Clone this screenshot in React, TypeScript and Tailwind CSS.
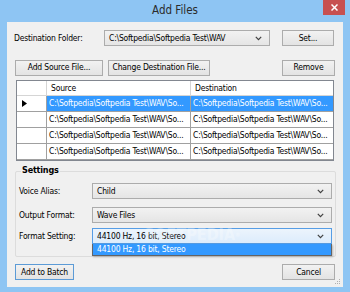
import React from "react";

const Chevron = () => (
  <svg width="7" height="5" viewBox="0 0 7 5" className="shrink-0">
    <path d="M0.8 0.8 L3.5 3.6 L6.2 0.8" fill="none" stroke="#404040" strokeWidth="1.2" />
  </svg>
);

function Combo({ text, w, active = false }: { text: string; w: string; active?: boolean }) {
  return (
    <div
      className={
        "flex items-center justify-between pl-[4px] pr-[7px] h-[16px] border " +
        w +
        (active
          ? " border-[#569de5] bg-gradient-to-b from-[#ecf4fc] to-[#dcecfc]"
          : " border-[#acacac] bg-gradient-to-b from-[#f2f2f2] to-[#e5e5e5]")
      }
    >
      <span className="whitespace-nowrap leading-none">{text}</span>
      <Chevron />
    </div>
  );
}

function Btn({ text, w, def = false }: { text: string; w: string; def?: boolean }) {
  return (
    <div
      className={
        "flex items-center justify-center h-[16px] border bg-gradient-to-b from-[#f2f2f2] to-[#e3e3e3] " +
        w +
        (def ? " border-[#5c9bd6]" : " border-[#acacac]")
      }
    >
      <span className="whitespace-nowrap leading-none">{text}</span>
    </div>
  );
}

const path = "C:\\Softpedia\\Softpedia Test\\WAV\\So...";

function Row({ sel }: { sel?: boolean }) {
  return (
    <div className="flex h-[16px] border-b border-[#a0a0a0]">
      <div className="w-[30px] shrink-0 border-r border-[#a0a0a0] bg-white flex items-center pl-[5px]">
        {sel && (
          <svg width="5" height="7" viewBox="0 0 5 7">
            <path d="M0 0 L5 3.5 L0 7 Z" fill="#000" />
          </svg>
        )}
      </div>
      <div
        className={
          "w-[144px] shrink-0 border-r border-[#a0a0a0] flex items-center pl-[2px] overflow-hidden whitespace-nowrap " +
          (sel ? "bg-[#3399ff] text-white" : "bg-white")
        }
      >
        {path}
      </div>
      <div
        className={
          "flex-1 flex items-center pl-[2px] overflow-hidden whitespace-nowrap " +
          (sel ? "bg-[#3399ff] text-white" : "bg-white")
        }
      >
        {path}
      </div>
    </div>
  );
}

export default function App() {
  return (
    <div className="w-[350px] h-[292px] bg-[#8ec5f3] flex flex-col text-[8.5px] tracking-[-0.2px] text-[#000] font-['Liberation_Sans_Narrow','DejaVu_Sans_Condensed','Liberation_Sans',sans-serif] overflow-hidden">
      <div className="h-[22px] relative flex items-center justify-center shrink-0">
        <span className="text-[11.5px] tracking-[0px] text-[#2b2b2b] leading-none">Add Files</span>
        <div className="absolute right-[5px] top-0 w-[22px] h-[15px] bg-[#c75050] flex items-center justify-center">
          <svg width="7" height="7" viewBox="0 0 7 7">
            <path d="M0.5 0.5 L6.5 6.5 M6.5 0.5 L0.5 6.5" stroke="#fff" strokeWidth="1.5" />
          </svg>
        </div>
      </div>
      <div className="relative mx-[7px] h-[265px] bg-[#f0f0f0] flex flex-col shrink-0">
        {/* row 1 */}
        <div className="flex items-center mt-[8px] pl-[7px] h-[16px]">
          <span className="w-[90px] shrink-0 whitespace-nowrap">Destination Folder:</span>
          <Combo text="C:\Softpedia\Softpedia Test\WAV" w="w-[166px]" />
          <div className="ml-[12px]">
            <Btn text="Set..." w="w-[52px]" />
          </div>
        </div>
        {/* row 2 */}
        <div className="flex items-center mt-[14px] pl-[8px] h-[15px]">
          <Btn text="Add Source File..." w="w-[88px]" />
          <div className="ml-[5px]">
            <Btn text="Change Destination File..." w="w-[102px]" />
          </div>
          <div className="ml-[72px]">
            <Btn text="Remove" w="w-[53px]" />
          </div>
        </div>
        {/* grid */}
        <div className="ml-[9px] mt-[5px] w-[318px] h-[81px] border border-[#828790] bg-white flex flex-col overflow-hidden">
          <div className="flex h-[15px] border-b border-[#d5d5d5]">
            <div className="w-[30px] shrink-0 border-r border-[#d5d5d5]" />
            <div className="w-[144px] shrink-0 border-r border-[#d5d5d5] flex items-center pl-[4px]">Source</div>
            <div className="flex-1 flex items-center pl-[4px]">Destination</div>
          </div>
          <Row sel />
          <Row />
          <Row />
          <Row />
        </div>
        {/* group box */}
        <div className="relative ml-[8px] mt-[10px] w-[321px] h-[86px] border border-[#dcdcdc] rounded-[2px]">
          <span className="absolute left-[5px] top-[-6px] px-[1px] bg-[#f0f0f0] font-bold leading-none text-[9px]">Settings</span>
          <div className="flex items-center mt-[11px] h-[16px]">
            <span className="w-[76px] pl-[3px] shrink-0">Voice Alias:</span>
            <Combo text="Child" w="w-[240px]" />
          </div>
          <div className="flex items-center mt-[8px] h-[16px]">
            <span className="w-[76px] pl-[3px] shrink-0">Output Format:</span>
            <Combo text="Wave Files" w="w-[240px]" />
          </div>
          <div className="relative flex items-center mt-[5px] h-[16px]">
            <span className="w-[76px] pl-[3px] shrink-0">Format Setting:</span>
            <Combo text="44100 Hz, 16 bit, Stereo" w="w-[240px]" active />
            <div className="absolute left-[76px] top-[16px] w-[240px] h-[12px] bg-[#3399ff] text-white border border-t-0 border-[#646464] pl-[4px] flex items-center shadow-[1px_1px_2px_rgba(0,0,0,0.25)] z-10">
              <span className="whitespace-nowrap leading-none">44100 Hz, 16 bit, Stereo</span>
            </div>
            <span className="absolute left-[128px] top-[-1px] text-[16px] font-bold text-white/30 tracking-[0px] z-20 pointer-events-none leading-none">
              SOFTPEDIA<sup className="text-[6px]">®</sup>
            </span>
          </div>
        </div>
        {/* bottom */}
        <div className="flex items-center mt-[7px] pl-[8px] h-[16px]">
          <Btn text="Add to Batch" w="w-[59px]" def />
          <div className="ml-auto mr-[8px]">
            <Btn text="Cancel" w="w-[53px]" />
          </div>
        </div>
        <svg className="absolute right-[2px] bottom-[2px]" width="7" height="7" viewBox="0 0 7 7">
          <rect x="5" y="1" width="1" height="1" fill="#b0b0b0" />
          <rect x="3" y="3" width="1" height="1" fill="#b0b0b0" />
          <rect x="5" y="3" width="1" height="1" fill="#b0b0b0" />
          <rect x="1" y="5" width="1" height="1" fill="#b0b0b0" />
          <rect x="3" y="5" width="1" height="1" fill="#b0b0b0" />
          <rect x="5" y="5" width="1" height="1" fill="#b0b0b0" />
        </svg>
      </div>
    </div>
  );
}
